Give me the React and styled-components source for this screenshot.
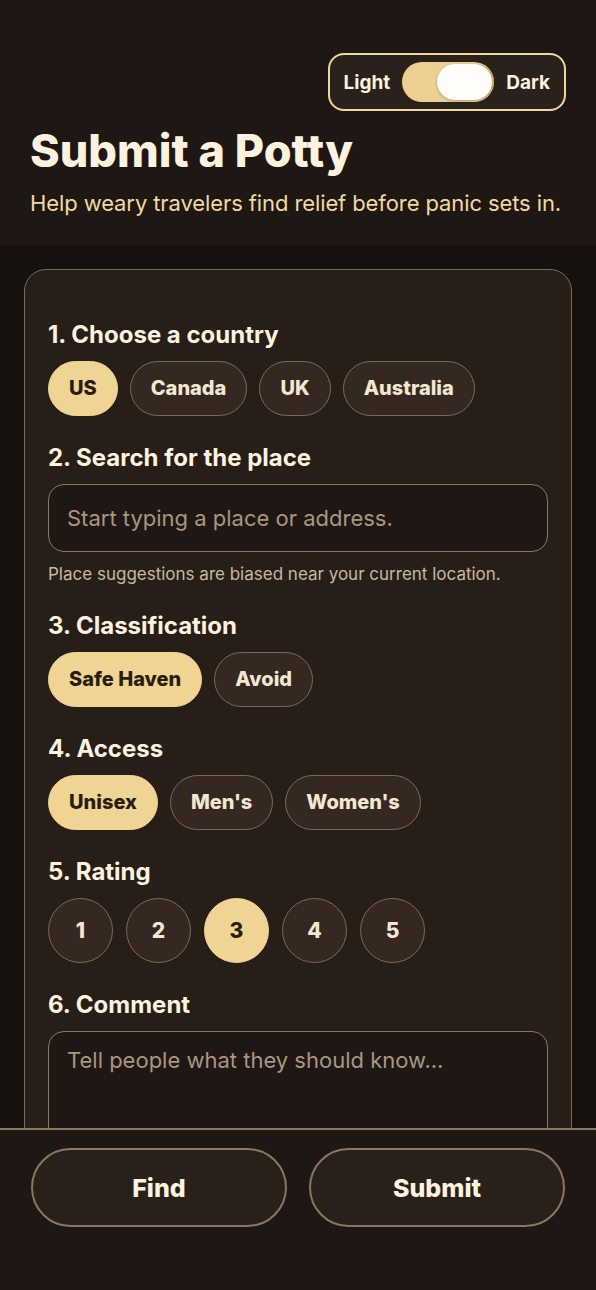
import React, { useState } from "react";
import styled, { createGlobalStyle } from "styled-components";

const Global = createGlobalStyle`
  html, body {
    margin: 0;
    padding: 0;
    background: #17110d;
  }
  * { box-sizing: border-box; }
  body {
    font-family: Inter, "Noto Sans", "Liberation Sans", sans-serif;
    -webkit-font-smoothing: antialiased;
  }
`;

const Page = styled.div`
  min-height: 100vh;
  background: #17110d;
  padding-bottom: 170px;
`;

const Header = styled.header`
  background: #1f1713;
  padding: 53px 30px 28px;
  display: flex;
  flex-direction: column;
`;

const ToggleBox = styled.div`
  align-self: flex-end;
  display: flex;
  align-items: center;
  gap: 12px;
  height: 58px;
  padding: 0 14px;
  border: 2px solid #f0d79c;
  border-radius: 16px;
  background: #2a211b;
`;

const ToggleText = styled.span`
  font-size: 19px;
  font-weight: 700;
  color: #fbf1de;
`;

const Track = styled.button`
  width: 92px;
  height: 40px;
  border: none;
  border-radius: 20px;
  background: #ecd092;
  padding: 2px;
  display: flex;
  justify-content: ${(p) => (p.$on ? "flex-end" : "flex-start")};
  cursor: pointer;
`;

const Knob = styled.span`
  width: 55px;
  height: 36px;
  border-radius: 18px;
  background: #fffdf8;
  box-shadow: 2px 0 0 #c7a566, 0 1px 3px rgba(0, 0, 0, 0.25);
`;

const Title = styled.h1`
  margin: 15px 0 0;
  font-size: 45px;
  line-height: 1.12;
  font-weight: 800;
  color: #fcf2df;
`;

const Subtitle = styled.p`
  margin: 13px 0 0;
  font-size: 22px;
  line-height: 1.3;
  font-weight: 400;
  letter-spacing: -0.1px;
  white-space: nowrap;
  color: #f1d9a2;
`;

const Main = styled.main`
  padding: 23px 24px 0;
`;

const Card = styled.section`
  background: #271e18;
  border: 1.5px solid #7d6a55;
  border-radius: 22px;
  padding: 51px 23px 40px;
  display: flex;
  flex-direction: column;
  gap: 28px;
`;

const Field = styled.div`
  display: flex;
  flex-direction: column;
  gap: 12px;
`;

const Label = styled.h2`
  margin: 0;
  font-size: 24px;
  line-height: 28px;
  font-weight: 700;
  color: #fcf2df;
`;

const Row = styled.div`
  display: flex;
  flex-wrap: wrap;
  gap: ${(p) => p.$gap || 12}px;
`;

const Pill = styled.button`
  height: 55px;
  padding: 0 20px;
  border-radius: 28px;
  font-family: inherit;
  font-size: 20px;
  font-weight: 800;
  cursor: pointer;
  border: 1.5px solid ${(p) => (p.$active ? "#efd493" : "#7d6a55")};
  background: ${(p) => (p.$active ? "#efd493" : "#342820")};
  color: ${(p) => (p.$active ? "#2a1c12" : "#f3e7d2")};
`;

const Circle = styled(Pill)`
  width: 65px;
  height: 65px;
  padding: 0;
  border-radius: 50%;
  font-size: 21px;
`;

const TextInput = styled.input`
  height: 68px;
  width: 100%;
  border-radius: 16px;
  border: 1.5px solid #8a7661;
  background: #1e1713;
  padding: 0 18px;
  font-family: inherit;
  font-size: 22px;
  color: #f3e7d2;
  outline: none;
  &::placeholder { color: #a99681; }
`;

const Helper = styled.p`
  margin: 0;
  font-size: 17px;
  line-height: 20px;
  color: #cbb89d;
`;

const TextArea = styled.textarea`
  width: 100%;
  height: 160px;
  border-radius: 16px;
  border: 1.5px solid #8a7661;
  background: #1e1713;
  padding: 14px 18px;
  font-family: inherit;
  font-size: 22px;
  line-height: 1.3;
  color: #f3e7d2;
  resize: none;
  outline: none;
  &::placeholder { color: #a99681; }
`;

const BottomBar = styled.nav`
  position: fixed;
  left: 0;
  right: 0;
  bottom: 0;
  height: 162px;
  background: #1f1713;
  border-top: 2px solid #8a7661;
  padding: 18px 31px 0;
  display: grid;
  grid-template-columns: 1fr 1fr;
  column-gap: 22px;
  align-items: start;
`;

const BarButton = styled.button`
  height: 79px;
  border-radius: 40px;
  border: 2px solid #8a7661;
  background: #2a201a;
  color: #fcf2df;
  font-family: inherit;
  font-size: 25px;
  font-weight: 800;
  cursor: pointer;
`;

const countries = ["US", "Canada", "UK", "Australia"];
const classes = ["Safe Haven", "Avoid"];
const access = ["Unisex", "Men's", "Women's"];
const ratings = [1, 2, 3, 4, 5];

export default function App() {
  const [dark, setDark] = useState(true);
  const [country, setCountry] = useState("US");
  const [kind, setKind] = useState("Safe Haven");
  const [gender, setGender] = useState("Unisex");
  const [rating, setRating] = useState(3);

  return (
    <Page>
      <Global />
      <Header>
        <ToggleBox>
          <ToggleText>Light</ToggleText>
          <Track $on={dark} onClick={() => setDark(!dark)} aria-label="Theme">
            <Knob />
          </Track>
          <ToggleText>Dark</ToggleText>
        </ToggleBox>
        <Title>Submit a Potty</Title>
        <Subtitle>Help weary travelers find relief before panic sets in.</Subtitle>
      </Header>
      <Main>
        <Card>
          <Field>
            <Label>1. Choose a country</Label>
            <Row>
              {countries.map((c) => (
                <Pill key={c} $active={country === c} onClick={() => setCountry(c)}>
                  {c}
                </Pill>
              ))}
            </Row>
          </Field>
          <Field>
            <Label>2. Search for the place</Label>
            <TextInput placeholder="Start typing a place or address." />
            <Helper>Place suggestions are biased near your current location.</Helper>
          </Field>
          <Field>
            <Label>3. Classification</Label>
            <Row>
              {classes.map((c) => (
                <Pill key={c} $active={kind === c} onClick={() => setKind(c)}>
                  {c}
                </Pill>
              ))}
            </Row>
          </Field>
          <Field>
            <Label>4. Access</Label>
            <Row>
              {access.map((c) => (
                <Pill key={c} $active={gender === c} onClick={() => setGender(c)}>
                  {c}
                </Pill>
              ))}
            </Row>
          </Field>
          <Field>
            <Label>5. Rating</Label>
            <Row $gap={13}>
              {ratings.map((r) => (
                <Circle key={r} $active={rating === r} onClick={() => setRating(r)}>
                  {r}
                </Circle>
              ))}
            </Row>
          </Field>
          <Field>
            <Label>6. Comment</Label>
            <TextArea placeholder="Tell people what they should know..." />
          </Field>
        </Card>
      </Main>
      <BottomBar>
        <BarButton>Find</BarButton>
        <BarButton>Submit</BarButton>
      </BottomBar>
    </Page>
  );
}
